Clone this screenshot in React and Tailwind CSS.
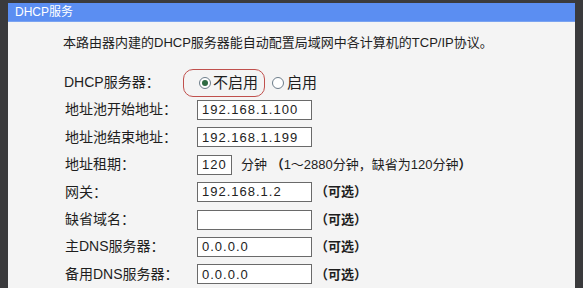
import React from "react";

const font = { fontFamily: '"Liberation Sans", "Noto Sans CJK SC", sans-serif' };

function Row({ label, children }) {
  return (
    <div className="flex items-center h-[27.4px]">
      <div className="w-[134px] shrink-0 pl-[2px] text-[14px] text-[#1e1e1e]">{label}</div>
      {children}
    </div>
  );
}

function Input({ value, w = "w-[115px]" }) {
  return (
    <div className={`${w} h-[20px] bg-white border border-[#6a6a6a] flex items-center pl-[4px] text-[13px] text-[#222] tracking-[1px]`}>
      {value}
    </div>
  );
}

function Optional() {
  return <span className="ml-[3px] text-[13px] font-bold text-[#1e1e1e]">（可选）</span>;
}

export default function App() {
  return (
    <div className="w-[583px] h-[288px] overflow-hidden bg-[#3b3b3d] flex" style={font}>
      <div className="w-[8px] shrink-0 bg-[#3a3a3c]" />
      <div className="flex-1 flex flex-col pt-[3px]">
        <div className="h-[23px] bg-[#5b8ef2] border-b border-[#7aa3f0] flex items-center pl-[7px] text-[12px] text-white">
          DHCP服务
        </div>
        <div className="flex-1 bg-[#f4f4f4] pl-[55px] pt-[12px]">
          <div className="h-[16px] flex items-center text-[13px] text-[#1e1e1e]">
            本路由器内建的DHCP服务器能自动配置局域网中各计算机的TCP/IP协议。
          </div>
          <div className="mt-[19px]">
            <div className="flex items-center h-[27px]">
              <div className="w-[120px] shrink-0 pl-[1px] text-[14px] text-[#1e1e1e]">DHCP服务器：</div>
              <div className="h-[28px] w-[82px] rounded-[10px] border border-[#c0504d] flex items-center pl-[15px]">
                <span className="w-[12px] h-[12px] shrink-0 rounded-full border border-[#6d7d8a] bg-white flex items-center justify-center">
                  <span className="w-[6px] h-[6px] rounded-full bg-[#2f6b43]" />
                </span>
                <span className="ml-[2px] text-[15px] text-[#1e1e1e] whitespace-nowrap">不启用</span>
              </div>
              <span className="ml-[7px] w-[12px] h-[12px] rounded-full border border-[#6d7d8a] bg-white" />
              <span className="ml-[3px] text-[15px] text-[#1e1e1e]">启用</span>
            </div>
            <Row label="地址池开始地址：">
              <Input value="192.168.1.100" />
            </Row>
            <Row label="地址池结束地址：">
              <Input value="192.168.1.199" />
            </Row>
            <Row label="地址租期：">
              <Input value="120" w="w-[35px]" />
              <span className="ml-[9px] text-[13px] text-[#1e1e1e]">分钟 <span className="font-bold">（</span>1～2880分钟，缺省为120分钟<span className="font-bold">）</span></span>
            </Row>
            <Row label="网关：">
              <Input value="192.168.1.2" />
              <Optional />
            </Row>
            <Row label="缺省域名：">
              <Input value="" />
              <Optional />
            </Row>
            <Row label="主DNS服务器：">
              <Input value="0.0.0.0" />
              <Optional />
            </Row>
            <Row label="备用DNS服务器：">
              <Input value="0.0.0.0" />
              <Optional />
            </Row>
          </div>
        </div>
      </div>
      <div className="w-[8px] shrink-0 bg-[#3a3a3c]" />
    </div>
  );
}
